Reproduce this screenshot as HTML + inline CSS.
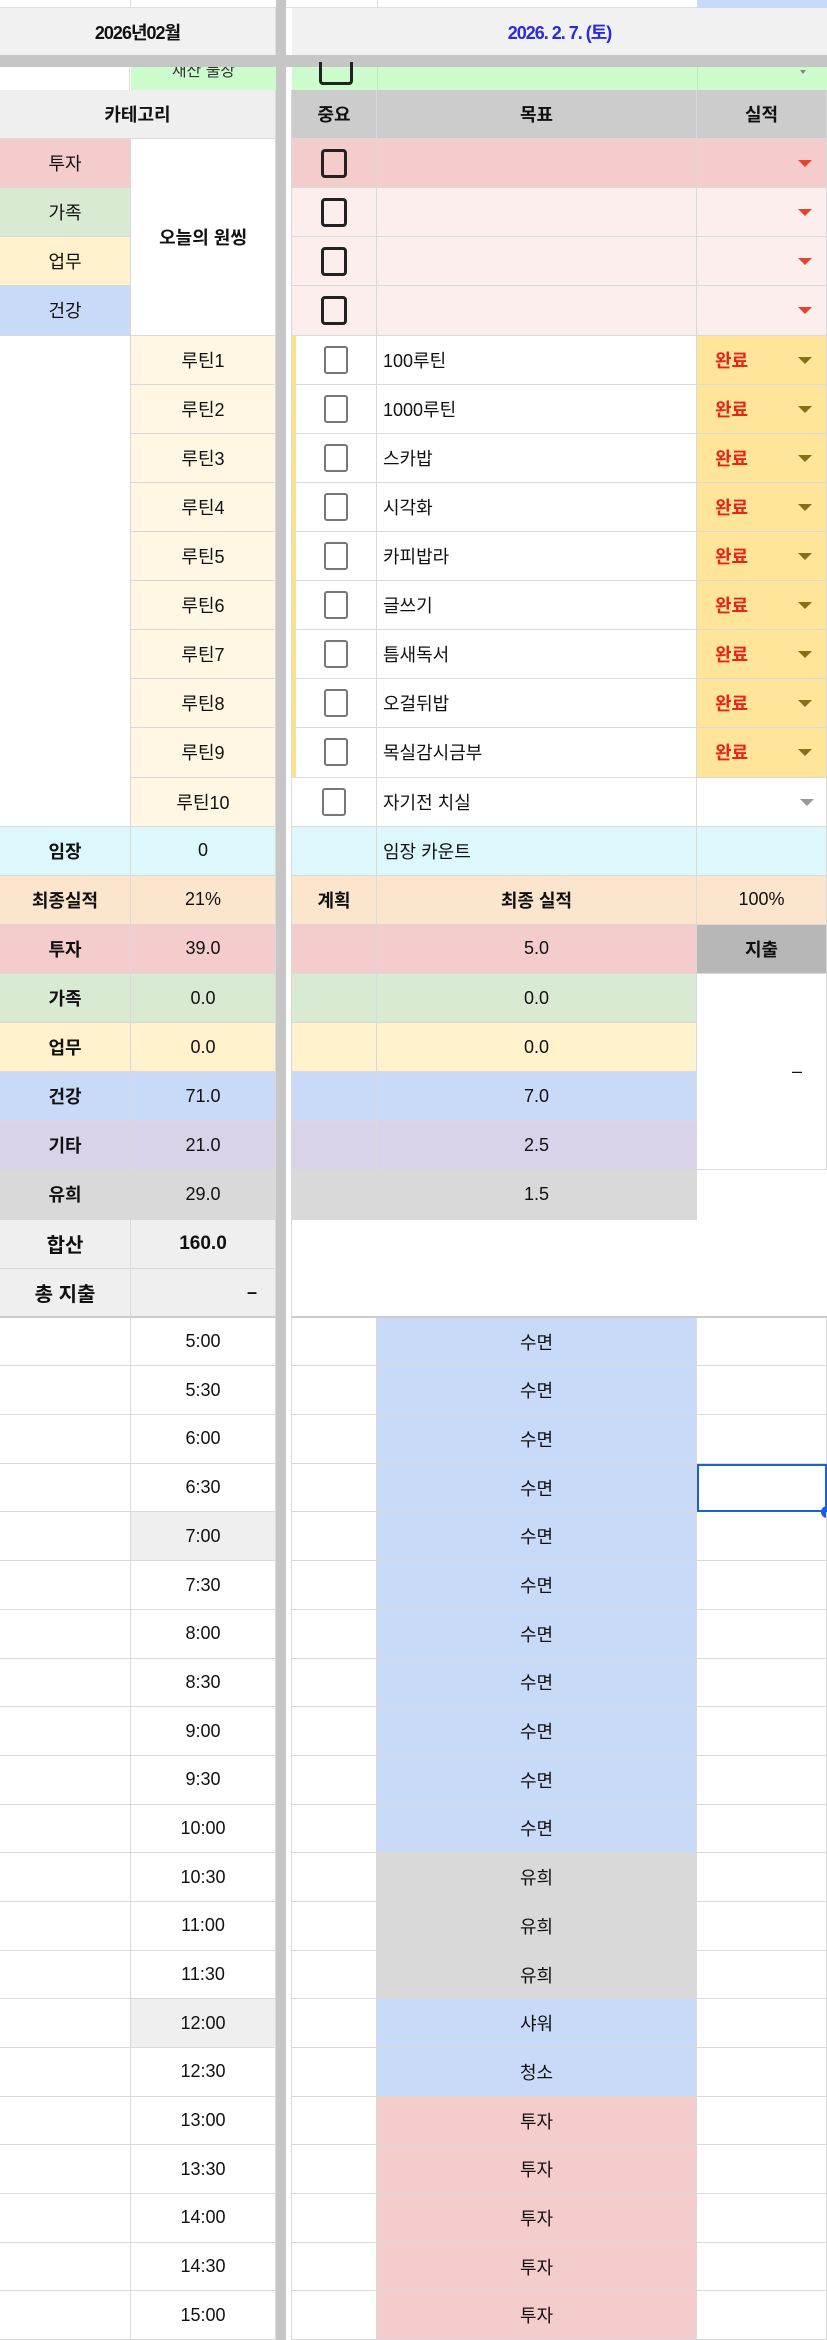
<!DOCTYPE html>
<html><head><meta charset="utf-8">
<style>
*{box-sizing:border-box;margin:0;padding:0}
body{width:827px;height:2338px;overflow:hidden;background:#fff;font-family:"Liberation Sans","Noto Sans CJK KR",sans-serif;font-size:18px;color:#111}
.top{position:absolute;left:0;top:0;width:827px;height:90px}
.g{position:absolute;left:0;top:90px;width:827px;display:grid;grid-template-columns:131px 145px 16px 85px 320px 130px;grid-template-rows:repeat(25,49.12px) repeat(21,48.7px)}
.c{display:flex;align-items:center;justify-content:center;border-right:1px solid #d9d9d9;border-bottom:1px solid #d9d9d9;white-space:nowrap;position:relative}
.b{font-weight:bold}
.l{justify-content:flex-start;padding-left:6px}
.sep{grid-column:3;grid-row:1/47;background:linear-gradient(90deg,#c6c6c6 0,#c6c6c6 10px,#fff 10px);border-right:1px solid #d9d9d9}
.cb{width:26px;height:29px;border:3px solid #222;border-radius:4px}
.cg{width:24px;height:28px;border:2.5px solid #777;border-radius:3px}
.tri{position:absolute;right:14px;top:50%;margin-top:-3px;width:0;height:0;border-left:7px solid transparent;border-right:7px solid transparent;border-top:7px solid #e8412c}
.ty{border-top-color:#8a6d1b}
.tg{border-top-color:#999;right:12px}
.done{color:#e8241a;font-weight:bold;justify-content:flex-start;padding-left:18px}
.pk{background:#f4cccc}.gr{background:#d9ead3}.yl{background:#fff2cc}.bl{background:#c9daf8}.pu{background:#d9d2e9}.gy{background:#d9d9d9}
.pe{background:#fce5cd}.cy{background:#dcf8fc}.lp{background:#fdeeee}.cr{background:#fff7e3}.hd{background:#efefef}.hd2{background:#cccccc}
</style></head><body>
<div class="top">
  <div style="position:absolute;left:0;top:0;width:827px;height:8px;background:#fff;border-bottom:1px solid #ddd"></div>
  <div style="position:absolute;left:130px;top:0;width:1px;height:8px;background:#ddd"></div>
  <div style="position:absolute;left:377px;top:0;width:1px;height:8px;background:#ddd"></div>
  <div style="position:absolute;left:697px;top:0;width:130px;height:8px;background:#c9daf8"></div>
  <div style="position:absolute;left:0;top:8px;width:276px;height:47px;background:#f1f1f1;display:flex;align-items:center;justify-content:center;font-size:18px;font-weight:bold;letter-spacing:-1px;border-right:1px solid #ddd">2026년02월</div>
  <div style="position:absolute;left:276px;top:0;width:10px;height:90px;background:#c6c6c6"></div>
  <div style="position:absolute;left:292px;top:8px;width:535px;height:47px;background:#f1f1f1;display:flex;align-items:center;justify-content:center;color:#2a2ae0;font-size:18px;font-weight:bold;letter-spacing:-1px">2026. 2. 7. (토)</div>
  <div style="position:absolute;left:0;top:55px;width:827px;height:12px;background:#c6c6c6"></div>
  <div style="position:absolute;left:0;top:67px;width:130px;height:23px;background:#fff;border-right:1px solid #ddd"></div>
  <div style="position:absolute;left:131px;top:67px;width:145px;height:23px;background:#ccfccc;overflow:hidden;font-size:16px;text-align:center;line-height:10px;color:#333">재산 불장</div>
  <div style="position:absolute;left:292px;top:67px;width:535px;height:23px;background:#ccfccc"></div>
  <div style="position:absolute;left:377px;top:67px;width:1px;height:23px;background:#bde8bd"></div>
  <div style="position:absolute;left:697px;top:67px;width:1px;height:23px;background:#bde8bd"></div>
  <div style="position:absolute;left:319px;top:62px;width:34px;height:23px;border:3px solid #222;border-top:none;border-radius:0 0 4px 4px"></div>
  <div style="position:absolute;left:800px;top:70px;border-left:3px solid transparent;border-right:3px solid transparent;border-top:4px solid #888"></div>
</div>
<div class="g">
  <div class="sep"></div>
  <div class="c hd b" style="grid-column:1/3;grid-row:1">카테고리</div>
  <div class="c hd2 b" style="grid-column:4;grid-row:1">중요</div>
  <div class="c hd2 b" style="grid-column:5;grid-row:1">목표</div>
  <div class="c hd2 b" style="grid-column:6;grid-row:1">실적</div>
  <div class="c pk" style="grid-column:1;grid-row:2">투자</div>
  <div class="c gr" style="grid-column:1;grid-row:3">가족</div>
  <div class="c yl" style="grid-column:1;grid-row:4">업무</div>
  <div class="c bl" style="grid-column:1;grid-row:5">건강</div>
  <div class="c b" style="grid-column:2;grid-row:2/6">오늘의 원씽</div>
  <div class="c pk" style="grid-column:4;grid-row:2"><div class="cb"></div></div>
  <div class="c pk" style="grid-column:5;grid-row:2"></div>
  <div class="c pk" style="grid-column:6;grid-row:2"><div class="tri"></div></div>
  <div class="c lp" style="grid-column:4;grid-row:3"><div class="cb"></div></div>
  <div class="c lp" style="grid-column:5;grid-row:3"></div>
  <div class="c lp" style="grid-column:6;grid-row:3"><div class="tri"></div></div>
  <div class="c lp" style="grid-column:4;grid-row:4"><div class="cb"></div></div>
  <div class="c lp" style="grid-column:5;grid-row:4"></div>
  <div class="c lp" style="grid-column:6;grid-row:4"><div class="tri"></div></div>
  <div class="c lp" style="grid-column:4;grid-row:5"><div class="cb"></div></div>
  <div class="c lp" style="grid-column:5;grid-row:5"></div>
  <div class="c lp" style="grid-column:6;grid-row:5"><div class="tri"></div></div>
  <div class="c" style="grid-column:1;grid-row:6/16"></div>
  <div class="c cr" style="grid-column:2;grid-row:6">루틴1</div>
  <div class="c cr" style="grid-column:2;grid-row:7">루틴2</div>
  <div class="c cr" style="grid-column:2;grid-row:8">루틴3</div>
  <div class="c cr" style="grid-column:2;grid-row:9">루틴4</div>
  <div class="c cr" style="grid-column:2;grid-row:10">루틴5</div>
  <div class="c cr" style="grid-column:2;grid-row:11">루틴6</div>
  <div class="c cr" style="grid-column:2;grid-row:12">루틴7</div>
  <div class="c cr" style="grid-column:2;grid-row:13">루틴8</div>
  <div class="c cr" style="grid-column:2;grid-row:14">루틴9</div>
  <div class="c cr" style="grid-column:2;grid-row:15">루틴10</div>
  <div class="c" style="grid-column:4;grid-row:6;border-left:4px solid #ffe08a"><div class="cg"></div></div>
  <div class="c" style="grid-column:4;grid-row:7;border-left:4px solid #ffe08a"><div class="cg"></div></div>
  <div class="c" style="grid-column:4;grid-row:8;border-left:4px solid #ffe08a"><div class="cg"></div></div>
  <div class="c" style="grid-column:4;grid-row:9;border-left:4px solid #ffe08a"><div class="cg"></div></div>
  <div class="c" style="grid-column:4;grid-row:10;border-left:4px solid #ffe08a"><div class="cg"></div></div>
  <div class="c" style="grid-column:4;grid-row:11;border-left:4px solid #ffe08a"><div class="cg"></div></div>
  <div class="c" style="grid-column:4;grid-row:12;border-left:4px solid #ffe08a"><div class="cg"></div></div>
  <div class="c" style="grid-column:4;grid-row:13;border-left:4px solid #ffe08a"><div class="cg"></div></div>
  <div class="c" style="grid-column:4;grid-row:14;border-left:4px solid #ffe08a"><div class="cg"></div></div>
  <div class="c" style="grid-column:4;grid-row:15"><div class="cg"></div></div>
  <div class="c l" style="grid-column:5;grid-row:6">100루틴</div>
  <div class="c l" style="grid-column:5;grid-row:7">1000루틴</div>
  <div class="c l" style="grid-column:5;grid-row:8">스카밥</div>
  <div class="c l" style="grid-column:5;grid-row:9">시각화</div>
  <div class="c l" style="grid-column:5;grid-row:10">카피밥라</div>
  <div class="c l" style="grid-column:5;grid-row:11">글쓰기</div>
  <div class="c l" style="grid-column:5;grid-row:12">틈새독서</div>
  <div class="c l" style="grid-column:5;grid-row:13">오걸뒤밥</div>
  <div class="c l" style="grid-column:5;grid-row:14">목실감시금부</div>
  <div class="c l" style="grid-column:5;grid-row:15">자기전 치실</div>
  <div class="c done" style="grid-column:6;grid-row:6;background:#ffe599">완료<div class="tri ty"></div></div>
  <div class="c done" style="grid-column:6;grid-row:7;background:#ffe599">완료<div class="tri ty"></div></div>
  <div class="c done" style="grid-column:6;grid-row:8;background:#ffe599">완료<div class="tri ty"></div></div>
  <div class="c done" style="grid-column:6;grid-row:9;background:#ffe599">완료<div class="tri ty"></div></div>
  <div class="c done" style="grid-column:6;grid-row:10;background:#ffe599">완료<div class="tri ty"></div></div>
  <div class="c done" style="grid-column:6;grid-row:11;background:#ffe599">완료<div class="tri ty"></div></div>
  <div class="c done" style="grid-column:6;grid-row:12;background:#ffe599">완료<div class="tri ty"></div></div>
  <div class="c done" style="grid-column:6;grid-row:13;background:#ffe599">완료<div class="tri ty"></div></div>
  <div class="c done" style="grid-column:6;grid-row:14;background:#ffe599">완료<div class="tri ty"></div></div>
  <div class="c" style="grid-column:6;grid-row:15"><div class="tri tg"></div></div>
  <div class="c cy b" style="grid-column:1;grid-row:16">임장</div>
  <div class="c cy" style="grid-column:2;grid-row:16">0</div>
  <div class="c cy" style="grid-column:4;grid-row:16"></div>
  <div class="c cy l" style="grid-column:5;grid-row:16">임장 카운트</div>
  <div class="c cy" style="grid-column:6;grid-row:16"></div>
  <div class="c pe b" style="grid-column:1;grid-row:17">최종실적</div>
  <div class="c pe" style="grid-column:2;grid-row:17">21%</div>
  <div class="c pe b" style="grid-column:4;grid-row:17">계획</div>
  <div class="c pe b" style="grid-column:5;grid-row:17">최종 실적</div>
  <div class="c pe" style="grid-column:6;grid-row:17">100%</div>
  <div class="c pk b" style="grid-column:1;grid-row:18">투자</div><div class="c pk" style="grid-column:2;grid-row:18">39.0</div>
  <div class="c gr b" style="grid-column:1;grid-row:19">가족</div><div class="c gr" style="grid-column:2;grid-row:19">0.0</div>
  <div class="c yl b" style="grid-column:1;grid-row:20">업무</div><div class="c yl" style="grid-column:2;grid-row:20">0.0</div>
  <div class="c bl b" style="grid-column:1;grid-row:21">건강</div><div class="c bl" style="grid-column:2;grid-row:21">71.0</div>
  <div class="c pu b" style="grid-column:1;grid-row:22">기타</div><div class="c pu" style="grid-column:2;grid-row:22">21.0</div>
  <div class="c gy b" style="grid-column:1;grid-row:23">유희</div><div class="c gy" style="grid-column:2;grid-row:23">29.0</div>
  <div class="c pk" style="grid-column:4;grid-row:18"></div><div class="c pk" style="grid-column:5;grid-row:18">5.0</div>
  <div class="c gr" style="grid-column:4;grid-row:19"></div><div class="c gr" style="grid-column:5;grid-row:19">0.0</div>
  <div class="c yl" style="grid-column:4;grid-row:20"></div><div class="c yl" style="grid-column:5;grid-row:20">0.0</div>
  <div class="c bl" style="grid-column:4;grid-row:21"></div><div class="c bl" style="grid-column:5;grid-row:21">7.0</div>
  <div class="c pu" style="grid-column:4;grid-row:22"></div><div class="c pu" style="grid-column:5;grid-row:22">2.5</div>
  <div class="c gy" style="grid-column:4;grid-row:23"></div><div class="c gy" style="grid-column:5;grid-row:23">1.5</div>
  <div class="c b" style="grid-column:6;grid-row:18;background:#b7b7b7">지출</div>
  <div class="c" style="grid-column:6;grid-row:19/23;justify-content:flex-end;padding-right:24px">–</div>
  <div class="c hd b" style="grid-column:1;grid-row:24;font-size:20px">합산</div>
  <div class="c hd b" style="grid-column:2;grid-row:24;font-size:19px">160.0</div>
  <div class="c hd b" style="grid-column:1;grid-row:25;font-size:20px;border-bottom:2px solid #ccc">총 지출</div>
  <div class="c hd b" style="grid-column:2;grid-row:25;justify-content:flex-end;padding-right:18px;border-bottom:2px solid #ccc">–</div>
  <div style="grid-column:4/7;grid-row:25;border-bottom:2px solid #ccc"></div>
  <div class="c" style="grid-column:1;grid-row:26"></div><div class="c" style="grid-column:2;grid-row:26">5:00</div><div class="c" style="grid-column:4;grid-row:26"></div><div class="c bl" style="grid-column:5;grid-row:26">수면</div><div class="c" style="grid-column:6;grid-row:26"></div>
  <div class="c" style="grid-column:1;grid-row:27"></div><div class="c" style="grid-column:2;grid-row:27">5:30</div><div class="c" style="grid-column:4;grid-row:27"></div><div class="c bl" style="grid-column:5;grid-row:27">수면</div><div class="c" style="grid-column:6;grid-row:27"></div>
  <div class="c" style="grid-column:1;grid-row:28"></div><div class="c" style="grid-column:2;grid-row:28">6:00</div><div class="c" style="grid-column:4;grid-row:28"></div><div class="c bl" style="grid-column:5;grid-row:28">수면</div><div class="c" style="grid-column:6;grid-row:28"></div>
  <div class="c" style="grid-column:1;grid-row:29"></div><div class="c" style="grid-column:2;grid-row:29">6:30</div><div class="c" style="grid-column:4;grid-row:29"></div><div class="c bl" style="grid-column:5;grid-row:29">수면</div><div class="c" style="grid-column:6;grid-row:29;border:2px solid #1a5fe0"><div style="position:absolute;right:-8px;bottom:-8px;width:12px;height:12px;border-radius:50%;background:#1a5fe0"></div></div>
  <div class="c" style="grid-column:1;grid-row:30"></div><div class="c hd" style="grid-column:2;grid-row:30">7:00</div><div class="c" style="grid-column:4;grid-row:30"></div><div class="c bl" style="grid-column:5;grid-row:30">수면</div><div class="c" style="grid-column:6;grid-row:30"></div>
  <div class="c" style="grid-column:1;grid-row:31"></div><div class="c" style="grid-column:2;grid-row:31">7:30</div><div class="c" style="grid-column:4;grid-row:31"></div><div class="c bl" style="grid-column:5;grid-row:31">수면</div><div class="c" style="grid-column:6;grid-row:31"></div>
  <div class="c" style="grid-column:1;grid-row:32"></div><div class="c" style="grid-column:2;grid-row:32">8:00</div><div class="c" style="grid-column:4;grid-row:32"></div><div class="c bl" style="grid-column:5;grid-row:32">수면</div><div class="c" style="grid-column:6;grid-row:32"></div>
  <div class="c" style="grid-column:1;grid-row:33"></div><div class="c" style="grid-column:2;grid-row:33">8:30</div><div class="c" style="grid-column:4;grid-row:33"></div><div class="c bl" style="grid-column:5;grid-row:33">수면</div><div class="c" style="grid-column:6;grid-row:33"></div>
  <div class="c" style="grid-column:1;grid-row:34"></div><div class="c" style="grid-column:2;grid-row:34">9:00</div><div class="c" style="grid-column:4;grid-row:34"></div><div class="c bl" style="grid-column:5;grid-row:34">수면</div><div class="c" style="grid-column:6;grid-row:34"></div>
  <div class="c" style="grid-column:1;grid-row:35"></div><div class="c" style="grid-column:2;grid-row:35">9:30</div><div class="c" style="grid-column:4;grid-row:35"></div><div class="c bl" style="grid-column:5;grid-row:35">수면</div><div class="c" style="grid-column:6;grid-row:35"></div>
  <div class="c" style="grid-column:1;grid-row:36"></div><div class="c" style="grid-column:2;grid-row:36">10:00</div><div class="c" style="grid-column:4;grid-row:36"></div><div class="c bl" style="grid-column:5;grid-row:36">수면</div><div class="c" style="grid-column:6;grid-row:36"></div>
  <div class="c" style="grid-column:1;grid-row:37"></div><div class="c" style="grid-column:2;grid-row:37">10:30</div><div class="c" style="grid-column:4;grid-row:37"></div><div class="c gy" style="grid-column:5;grid-row:37">유희</div><div class="c" style="grid-column:6;grid-row:37"></div>
  <div class="c" style="grid-column:1;grid-row:38"></div><div class="c" style="grid-column:2;grid-row:38">11:00</div><div class="c" style="grid-column:4;grid-row:38"></div><div class="c gy" style="grid-column:5;grid-row:38">유희</div><div class="c" style="grid-column:6;grid-row:38"></div>
  <div class="c" style="grid-column:1;grid-row:39"></div><div class="c" style="grid-column:2;grid-row:39">11:30</div><div class="c" style="grid-column:4;grid-row:39"></div><div class="c gy" style="grid-column:5;grid-row:39">유희</div><div class="c" style="grid-column:6;grid-row:39"></div>
  <div class="c" style="grid-column:1;grid-row:40"></div><div class="c hd" style="grid-column:2;grid-row:40">12:00</div><div class="c" style="grid-column:4;grid-row:40"></div><div class="c bl" style="grid-column:5;grid-row:40">샤워</div><div class="c" style="grid-column:6;grid-row:40"></div>
  <div class="c" style="grid-column:1;grid-row:41"></div><div class="c" style="grid-column:2;grid-row:41">12:30</div><div class="c" style="grid-column:4;grid-row:41"></div><div class="c bl" style="grid-column:5;grid-row:41">청소</div><div class="c" style="grid-column:6;grid-row:41"></div>
  <div class="c" style="grid-column:1;grid-row:42"></div><div class="c" style="grid-column:2;grid-row:42">13:00</div><div class="c" style="grid-column:4;grid-row:42"></div><div class="c pk" style="grid-column:5;grid-row:42">투자</div><div class="c" style="grid-column:6;grid-row:42"></div>
  <div class="c" style="grid-column:1;grid-row:43"></div><div class="c" style="grid-column:2;grid-row:43">13:30</div><div class="c" style="grid-column:4;grid-row:43"></div><div class="c pk" style="grid-column:5;grid-row:43">투자</div><div class="c" style="grid-column:6;grid-row:43"></div>
  <div class="c" style="grid-column:1;grid-row:44"></div><div class="c" style="grid-column:2;grid-row:44">14:00</div><div class="c" style="grid-column:4;grid-row:44"></div><div class="c pk" style="grid-column:5;grid-row:44">투자</div><div class="c" style="grid-column:6;grid-row:44"></div>
  <div class="c" style="grid-column:1;grid-row:45"></div><div class="c" style="grid-column:2;grid-row:45">14:30</div><div class="c" style="grid-column:4;grid-row:45"></div><div class="c pk" style="grid-column:5;grid-row:45">투자</div><div class="c" style="grid-column:6;grid-row:45"></div>
  <div class="c" style="grid-column:1;grid-row:46"></div><div class="c" style="grid-column:2;grid-row:46">15:00</div><div class="c" style="grid-column:4;grid-row:46"></div><div class="c pk" style="grid-column:5;grid-row:46">투자</div><div class="c" style="grid-column:6;grid-row:46"></div>
</div>
</body></html>
